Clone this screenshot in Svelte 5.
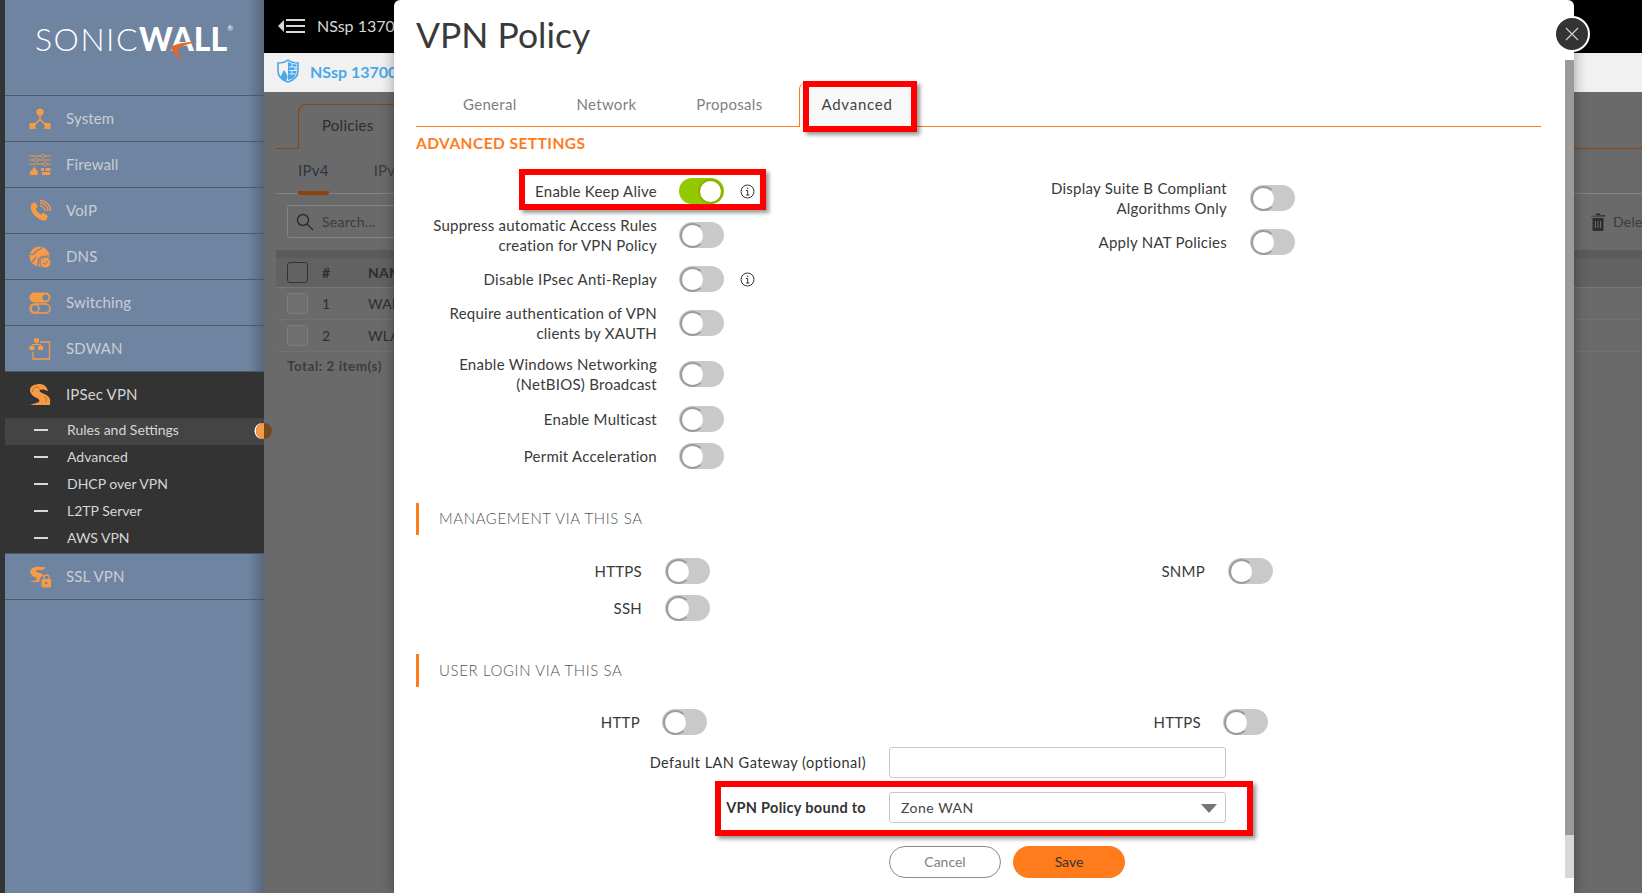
<script>
  const nav = [
    { name: 'System', icon: 'system' },
    { name: 'Firewall', icon: 'firewall' },
    { name: 'VoIP', icon: 'voip' },
    { name: 'DNS', icon: 'dns' },
    { name: 'Switching', icon: 'switching' },
    { name: 'SDWAN', icon: 'sdwan' }
  ];
  const subItems = ['Rules and Settings', 'Advanced', 'DHCP over VPN', 'L2TP Server', 'AWS VPN'];
  const leftRows = [
    { label: ['Enable Keep Alive'], on: true, info: true },
    { label: ['Suppress automatic Access Rules', 'creation for VPN Policy'] },
    { label: ['Disable IPsec Anti-Replay'], info: true },
    { label: ['Require authentication of VPN', 'clients by XAUTH'] },
    { label: ['Enable Windows Networking', '(NetBIOS) Broadcast'] },
    { label: ['Enable Multicast'] },
    { label: ['Permit Acceleration'] }
  ];
  const rightRows = [
    { label: ['Display Suite B Compliant', 'Algorithms Only'] },
    { label: ['Apply NAT Policies'] }
  ];
  const tabs = ['General', 'Network', 'Proposals'];
</script>

{#snippet navIcon(kind)}
  <svg class="nav-icon" width="22" height="22" viewBox="0 0 22 22" fill="#f79a45" stroke="none">
    {#if kind === 'system'}
      <circle cx="11" cy="4" r="3.6" />
      <path d="M11 7v5M11 11.5 5 17M11 11.5 17 17" stroke="#f79a45" stroke-width="1.5" fill="none" />
      <rect x="0.5" y="15" width="6" height="6" />
      <rect x="15.5" y="15" width="6" height="6" />
    {:else if kind === 'firewall'}
      <path d="M0.5 2h21M0.5 6h21M0.5 10h21" stroke="#f79a45" stroke-width="1" fill="none" />
      <rect x="12" y="0.5" width="4" height="3" rx="1.5" fill="#6f84a0" stroke="#f79a45" stroke-width=".8" />
      <rect x="5" y="4.5" width="4" height="3" rx="1.5" fill="#6f84a0" stroke="#f79a45" stroke-width=".8" />
      <rect x="14" y="8.5" width="4" height="3" rx="1.5" fill="#6f84a0" stroke="#f79a45" stroke-width=".8" />
      <path d="M1 21c-1-3 1-4 2.500-5.500.5-1 1-2 1.500-3 1 1.500 1.500 2 2.500 3.500 1 1 2 2.500 1 5z" />
      <path d="M12 14h3v3h-3zM16.500 14h5v3h-5zM13 18h8v3h-8z" />
    {:else if kind === 'voip'}
      <path d="M3 3.500 6 2l3 5-2.200 1.800c.8 2.400 2.800 4.600 5.400 5.800L14 12.500l5 3.500-1.500 3.500c-1 1.500-3 1.500-5 .5C7 18 3 13.500 1.800 8.500 1.300 6.500 1.800 4.500 3 3.500z" />
      <path d="M11 6a5 5 0 0 1 5 5M11 3a8 8 0 0 1 8 8M11 .5A10.500 10.500 0 0 1 21.500 11" stroke="#f79a45" stroke-width="1.300" fill="none" />
    {:else if kind === 'dns'}
      <circle cx="10.500" cy="10.500" r="10" />
      <path d="M1 8c3 1 5 0 6-3 2-1 5-1 6-4M9 20c0-4 0-7 3-9 2-1 4-1 8-1M3 16c2-2 3-3 4-5" stroke="#6f84a0" stroke-width="1.200" fill="none" />
      <circle cx="16.500" cy="16.500" r="5.500" stroke="#6f84a0" stroke-width="1" />
      <path d="M14 17l2 1.500 3-4" stroke="#6f84a0" stroke-width="1" fill="none" />
    {:else if kind === 'switching'}
      <rect x="0.500" y="0.500" width="21" height="10" rx="5" />
      <circle cx="16.500" cy="5.500" r="3" fill="#6f84a0" />
      <rect x="1" y="12" width="20" height="9" rx="4.500" fill="none" stroke="#f79a45" stroke-width="1.500" />
      <circle cx="6" cy="16.500" r="4" fill="none" stroke="#f79a45" stroke-width="1.500" />
    {:else if kind === 'sdwan'}
      <path d="M11 4h9.500v17H4v-7" fill="none" stroke="#f79a45" stroke-width="1.300" />
      <rect x="5" y="0.500" width="5" height="4" />
      <rect x="0.500" y="8" width="5" height="4" />
      <rect x="9" y="8" width="5" height="4" />
      <path d="M7.500 4.500v2M3 8V6.500h8.500V8" fill="none" stroke="#f79a45" stroke-width="1" />
    {:else if kind === 'ipsec'}
      <path d="M1 6C1 2 6 0 11 0c4 0 7 3 8 7-3-1-6-2-8-1-1 1 0 2 2 3 3 1 7 3 8 6 .3 2 0 4 0 6H1c3-1 6-2 9-3 1-1 0-3-2-4C5 13 1 10 1 6z" />
      <path d="M4 8c-1-3 1-5 3.500-5 2 0 3 1 3 2.500M15 12c2 1 3 3 2 6" stroke="#b5651d" stroke-width=".8" fill="none" />
    {:else if kind === 'ssl'}
      <path d="M1.500 4C3 1 7 .5 10 .7c2 .1 4 .7 6 0-.7 1.600-.8 3.100-2.500 3.300-2 .3-4-.5-6 .2-1.100.5-.5 1.500.8 2 2 .7 5 1 6 3 .4 1-2 1-3 2.500-.8 1.200-.5 3-1 4.300H.5c2-1.200 5.500-.8 7-2.300.8-1.100-.7-2-2.200-2.600C3 10 .5 7.200 1.500 4z" />
      <path d="M15 13v-1.500a2.500 2.500 0 0 1 5 0V13" fill="none" stroke="#f79a45" stroke-width="1.300" />
      <rect x="12.500" y="13" width="9.500" height="8.500" rx="1" />
      <circle cx="17.200" cy="17" r="1.300" fill="#6f84a0" />
    {/if}
  </svg>
{/snippet}

{#snippet toggle(on)}
  <span class="toggle" class:on><span class="thumb"></span></span>
{/snippet}

{#snippet info()}
  <svg class="info" width="15" height="15" viewBox="0 0 15 15" fill="none" stroke="#333">
    <circle cx="7.500" cy="7.500" r="6.500" />
    <path d="M6 6.500h1.700V11M6 11h3.300" />
    <circle cx="7.500" cy="4.200" r=".8" fill="#333" stroke="none" />
  </svg>
{/snippet}

{#snippet settingRow(row)}
  <div class="setting">
    <div class="setting-label">
      {#each row.label as line}<div>{line}</div>{/each}
    </div>
    {@render toggle(row.on)}
    {#if row.info}{@render info()}{/if}
  </div>
{/snippet}

<div class="page">
  <aside class="sidebar">
    <div class="logo">
      <span class="sonic">SONIC</span><span class="wall">WALL</span><span class="reg">®</span>
      <svg class="swoosh" width="32" height="22" viewBox="0 0 32 22">
        <path d="M30 .500C20 .800 8 1.500 1 6c-.5 3 4 8 13 15-4-5-7-9-6.500-12C11 4.500 20 2 30 .500z" fill="#e5662a" />
      </svg>
    </div>
    {#each nav as item}
      <div class="nav-row">
        {@render navIcon(item.icon)}
        <span>{item.name}</span>
      </div>
    {/each}
    <div class="group">
      <div class="nav-row open">
        {@render navIcon('ipsec')}
        <span>IPSec VPN</span>
      </div>
      {#each subItems as sub, i}
        <div class="sub-row" class:selected={i === 0}>
          <span class="dash"></span>
          <span>{sub}</span>
          {#if i === 0}<span class="marker"></span>{/if}
        </div>
      {/each}
    </div>
    <div class="nav-row">
      {@render navIcon('ssl')}
      <span>SSL VPN</span>
    </div>
  </aside>

  <main class="main">
    <header class="topbar">
      <svg width="28" height="18" viewBox="0 0 28 18" fill="#d8d8d8">
        <path d="M6 3v12L0 9z" />
        <rect x="8" y="2" width="19" height="2" />
        <rect x="8" y="8" width="19" height="2" />
        <rect x="8" y="14" width="19" height="2" />
      </svg>
      <span>NSsp 13700</span>
    </header>
    <div class="crumb">
      <svg width="22" height="24" viewBox="0 0 22 24">
        <path d="M11 1c2.500 2 6 3 10 3v8c0 5-4 9-10 11C5 21 1 17 1 12V4c4 0 7.500-1 10-3z" fill="none" stroke="#4aa8e8" stroke-width="1.600" />
        <path d="M11 3c2.500 1.500 5 2.500 8.500 2.500V12c0 3-1.500 6-4 7.500L11 21z" fill="#4aa8e8" />
        <path d="M12 8h8M12 11.500h8M12 15h7M15 5v3M18 8v3.500M15 11.500V15" stroke="#fff" stroke-width=".8" />
        <path d="M7 11c2 3 3.500 5 3.500 7a3 3 0 0 1-6.500 0c0-2 1.500-4 3-7z" fill="#4aa8e8" />
      </svg>
      <span>NSsp 13700</span>
    </div>
    <section class="content">
      <div class="tabbar"><div class="tab-active">Policies</div></div>
      <div class="subtabs">
        <span class="subtab current">IPv4</span>
        <span class="subtab">IPv6</span>
      </div>
      <div class="toolbar">
        <div class="search">
          <svg width="18" height="18" viewBox="0 0 18 18" fill="none" stroke="#2e2e2e" stroke-width="1.500">
            <circle cx="7" cy="7" r="5.500" />
            <path d="M11 11l6 6" />
          </svg>
          <span>Search...</span>
        </div>
        <div class="delete">
          <svg width="16" height="18" viewBox="0 0 16 18" fill="#2e2e2e">
            <path d="M1 3l14-1v1.500H1zM5.500 2l.5-1.500h4L10.500 2z" />
            <path d="M2.500 5h11v12a1 1 0 0 1-1 1h-9a1 1 0 0 1-1-1zM5 8v7h1V8zM7.500 8v7h1V8zM10 8v7h1V8z" fill-rule="evenodd" />
          </svg>
          <span>Delete</span>
        </div>
      </div>
      <div class="table">
        <div class="strip"></div>
        <div class="tr head">
          <span class="check strong"></span><span class="num">#</span><span>NAME</span>
        </div>
        <div class="tr"><span class="check"></span><span class="num">1</span><span>WAN</span></div>
        <div class="tr"><span class="check"></span><span class="num">2</span><span>WLAN</span></div>
        <div class="total">Total: 2 item(s)</div>
      </div>
    </section>
  </main>

  <div class="modal">
    <h1>VPN Policy</h1>
    <nav class="tabs">
      {#each tabs as t}<span class="tab">{t}</span>{/each}
      <span class="tab current">Advanced</span>
    </nav>
    <h2>ADVANCED SETTINGS</h2>

    <div class="columns">
      <div class="col-left">
        {#each leftRows as row}{@render settingRow(row)}{/each}
      </div>
      <div class="col-right">
        {#each rightRows as row}{@render settingRow(row)}{/each}
      </div>
    </div>

    <h3 class="section mgmt">MANAGEMENT VIA THIS SA</h3>
    <div class="pairs mgmt-grid">
      <span>HTTPS</span>{@render toggle(false)}<span>SNMP</span>{@render toggle(false)}
      <span>SSH</span>{@render toggle(false)}
    </div>

    <h3 class="section login">USER LOGIN VIA THIS SA</h3>
    <div class="pairs login-grid">
      <span>HTTP</span>{@render toggle(false)}<span>HTTPS</span>{@render toggle(false)}
    </div>

    <div class="form">
      <label for="gw">Default LAN Gateway (optional)</label>
      <input id="gw" type="text" />
      <span class="strong">VPN Policy bound to</span>
      <div class="select">
        <span>Zone WAN</span>
        <span class="caret"></span>
      </div>
    </div>
    <div class="actions">
      <button class="cancel">Cancel</button>
      <button class="save">Save</button>
    </div>

    <div class="scroll"></div>
    <div class="mark mark-tab"></div>
    <div class="mark mark-keep"></div>
    <div class="mark mark-bound"></div>
  </div>

  <button class="close" aria-label="Close">
    <svg width="14" height="14" viewBox="0 0 14 14" stroke="#d0d0d0" stroke-width="1.200"><path d="M1 1l12 12M13 1 1 13" /></svg>
  </button>
</div>

<style>
  :global(body) {
    margin: 0;
    overflow: hidden;
    font-family: Lato, "Open Sans", sans-serif;
  }

  .page {
    position: relative;
    display: flex;
    width: 1642px;
    height: 893px;
    overflow: hidden;
    background: #333;
    color: #333;
    font-size: 15px;
  }

  /* sidebar */
  .sidebar {
    position: relative;
    flex: none;
    width: 259px;
    margin-left: 5px;
    background: linear-gradient(90deg, #6f84a0 94%, #58687e);
    color: #c9ced4;
  }

  .logo {
    position: relative;
    display: flex;
    align-items: flex-start;
    height: 96px;
    padding: 19px 0 0 30px;
    box-sizing: border-box;
    border-bottom: 1px solid #4e5967;
    color: #fff;
    font-size: 32px;
    line-height: 40px;
  }

  .sonic {
    font-weight: 300;
    letter-spacing: 1.500px;
  }

  .wall {
    font-weight: 900;
    letter-spacing: 0;
  }

  .reg {
    font-size: 7px;
    line-height: 18px;
  }

  .swoosh {
    position: absolute;
    left: 165px;
    top: 41px;
  }

  .nav-row {
    display: flex;
    align-items: center;
    height: 46px;
    box-sizing: border-box;
    padding-left: 24px;
    gap: 15px;
    border-bottom: 1px solid #4e5967;
    font-size: 15px;
    letter-spacing: .15px;
  }

  .nav-row span {
    margin-top: -2px;
  }

  .nav-row.open {
    border-bottom: none;
    color: #d4d4d4;
  }

  .group {
    background: #333;
    border-bottom: 1px solid #4e5967;
  }

  .sub-row {
    position: relative;
    display: flex;
    align-items: center;
    height: 27px;
    box-sizing: border-box;
    padding: 0 0 4px 28px;
    gap: 20px;
    color: #d6d6d6;
    font-size: 14px;
  }

  .sub-row.selected {
    background: #444;
  }

  .dash {
    width: 14px;
    height: 2px;
    margin-left: 1px;
    margin-right: -1px;
    background: #d8d8d8;
  }

  .marker {
    position: absolute;
    right: -8px;
    top: 5px;
    width: 16px;
    height: 16px;
    border-radius: 50%;
    background: linear-gradient(90deg, #f79a45 50%, #704a22 50%);
    box-shadow: -1.500px 0 0 #fff;
    z-index: 2;
  }

  /* page behind the dialog */
  .main {
    flex: 1;
    display: flex;
    flex-direction: column;
    min-width: 0;
    background: #6a6a6a;
  }

  .topbar {
    display: flex;
    align-items: center;
    height: 51px;
    padding: 0 0 2px 14px;
    gap: 11px;
    background: #000;
    color: #d8d8d8;
    font-size: 16px;
  }

  .crumb {
    display: flex;
    align-items: center;
    height: 36px;
    padding: 0 0 3px 13px;
    gap: 11px;
    background: #f1f1f1;
    color: #4aa8e8;
    font-size: 16px;
    font-weight: 700;
  }

  .content {
    padding-left: 12px;
    color: #2e2e2e;
    letter-spacing: .25px;
  }

  .tabbar {
    display: flex;
    height: 44px;
    margin-top: 12px;
    padding-left: 22px;
    border-bottom: 1px solid #8a4311;
  }

  .tab-active {
    width: 300px;
    padding: 11px 0 0 23px;
    background: #6a6a6a;
    border: 1px solid #8a4311;
    border-bottom: none;
    border-right: none;
    border-top-left-radius: 8px;
    margin-bottom: -1px;
    font-size: 15px;
  }

  .subtabs {
    display: flex;
    height: 44px;
    padding-left: 22px;
    gap: 45px;
    border-bottom: 1px solid #828282;
    font-size: 15px;
  }

  .subtab {
    padding-top: 12px;
    color: #3c3c3c;
  }

  .subtab.current {
    color: #2c3644;
    border-bottom: 4px solid #8a4311;
    margin-bottom: -2px;
    border-radius: 2px;
  }

  .toolbar {
    display: flex;
    justify-content: space-between;
    margin-top: 11px;
    padding-left: 11px;
  }

  .search {
    display: flex;
    align-items: center;
    width: 300px;
    height: 33px;
    box-sizing: border-box;
    padding-left: 8px;
    gap: 8px;
    border: 1px solid #848484;
    border-radius: 3px;
    font-size: 14px;
    color: #3c3c3c;
  }

  .delete {
    flex: none;
    display: flex;
    align-items: center;
    width: 52px;
    gap: 7px;
    overflow: hidden;
    white-space: nowrap;
    font-size: 14px;
    color: #3c3c3c;
  }

  .delete svg {
    flex: none;
  }

  .table {
    margin-top: 12px;
    font-size: 14px;
  }

  .strip {
    height: 8px;
    background: #5b5b5b;
  }

  .tr {
    display: flex;
    align-items: center;
    height: 32px;
    padding-left: 11px;
    border-bottom: 1px solid #717171;
    box-sizing: border-box;
  }

  .tr.head {
    height: 30px;
    background: #626262;
    border-bottom-color: #777;
    font-weight: 700;
  }

  .check {
    width: 19px;
    height: 19px;
    border: 1px solid #7d7d7d;
    border-radius: 3px;
    background: #6f6f6f;
  }

  .check.strong {
    border-color: #333;
    background: none;
  }

  .num {
    width: 46px;
    margin-left: 14px;
  }

  .total {
    padding: 6px 0 0 11px;
    color: #3c3c3c;
    font-weight: 700;
    font-size: 13.500px;
    letter-spacing: .5px;
  }

  /* dialog */
  .modal {
    position: absolute;
    left: 394px;
    top: 0;
    width: 1180px;
    height: 893px;
    padding-left: 22px;
    box-sizing: border-box;
    background: #fff;
    border-radius: 6px 6px 0 0;
    box-shadow: 0 0 14px rgba(0, 0, 0, .35);
    letter-spacing: .25px;
  }

  h1 {
    margin: 0;
    height: 83px;
    font-size: 35.500px;
    font-weight: 400;
    line-height: 69px;
    letter-spacing: 0;
    color: #3a3a3a;
  }

  .tabs {
    display: flex;
    width: 1125px;
    height: 44px;
    box-sizing: border-box;
    border-bottom: 1px solid #ff7b1c;
    padding-left: 17px;
    font-size: 15px;
    line-height: 43px;
    letter-spacing: .3px;
    color: #808080;
  }

  .tab {
    padding: 0 30px;
  }

  .tab.current {
    margin-left: 7px;
    padding: 0 21px;
    width: 117px;
    height: 44px;
    box-sizing: border-box;
    letter-spacing: .75px;
    color: #444;
    background: #f8f8f8;
    border-left: 1px solid #ff7b1c;
    border-top-left-radius: 6px;
  }

  h2 {
    margin: 0;
    height: 33px;
    font-size: 15.500px;
    font-weight: 700;
    line-height: 33px;
    letter-spacing: .45px;
    color: #ff7b1c;
  }

  .columns {
    display: flex;
    margin-top: 18px;
  }

  .col-left {
    display: flex;
    flex-direction: column;
    gap: 11px;
    width: 560px;
  }

  .col-left .setting:nth-child(6) {
    margin-top: 1px;
  }

  .col-right {
    display: flex;
    flex-direction: column;
    gap: 11px;
    width: 400px;
  }

  .col-left .setting-label {
    width: 241px;
  }

  .col-right .setting-label {
    width: 251px;
    margin-right: 1px;
  }

  .setting {
    display: flex;
    align-items: center;
    gap: 22px;
    min-height: 26px;
  }

  .setting-label {
    text-align: right;
    line-height: 20px;
    color: #3a3a3a;
  }

  .toggle {
    flex: none;
    position: relative;
    display: block;
    width: 45px;
    height: 26px;
    border-radius: 13px;
    background: #c9c9c9;
    align-self: center;
  }

  .toggle.on {
    background: #94c800;
  }

  .thumb {
    position: absolute;
    left: 1px;
    top: 1px;
    width: 21px;
    height: 21px;
    border: 2px solid #9c9c9c;
    border-right-color: #c9c9c9;
    border-radius: 50%;
    background: #fff;
  }

  .on .thumb {
    left: auto;
    right: 1px;
    border-color: #85b400;
  }

  .info {
    flex: none;
    margin-left: -6px;
  }

  .section {
    margin: 34px 0 0;
    height: 32px;
    padding-left: 20px;
    border-left: 3px solid #ff7b1c;
    font-size: 15px;
    font-weight: 300;
    line-height: 31px;
    letter-spacing: .62px;
    color: #555;
  }

  .section.login {
    margin-top: 33px;
    height: 33px;
    line-height: 32px;
  }

  .pairs {
    display: grid;
    align-items: center;
    row-gap: 11px;
    margin-top: 23px;
    color: #3a3a3a;
  }

  .pairs span:not(.toggle, .thumb) {
    text-align: right;
  }

  .mgmt-grid {
    grid-template-columns: 226px 45px 472px 45px;
    column-gap: 23px;
  }

  .login-grid {
    grid-template-columns: 224px 45px 472px 45px;
    column-gap: 22px;
    margin-top: 22px;
  }

  .form {
    display: grid;
    grid-template-columns: 450px 337px;
    column-gap: 23px;
    row-gap: 14px;
    align-items: center;
    margin-top: 12px;
  }

  .form label,
  .form .strong {
    text-align: right;
    color: #333;
    font-size: 14.500px;
    letter-spacing: .48px;
  }

  .form .strong {
    font-weight: 700;
    letter-spacing: .3px;
  }

  input,
  .select {
    height: 31px;
    box-sizing: border-box;
    border: 1px solid #c8c8c8;
    border-radius: 3px;
    background: #fff;
  }

  .select {
    display: flex;
    align-items: center;
    justify-content: space-between;
    padding: 0 8px 1px 11px;
    color: #444;
    font-size: 14px;
    letter-spacing: .5px;
  }

  .caret {
    margin-top: 3px;
    border-left: 8px solid transparent;
    border-right: 8px solid transparent;
    border-top: 9px solid #757575;
  }

  .actions {
    display: flex;
    gap: 12px;
    margin: 23px 0 0 473px;
  }

  .actions button {
    width: 112px;
    height: 32px;
    padding-bottom: 2px;
    border-radius: 16px;
    font: inherit;
    font-size: 14px;
  }

  .cancel {
    border: 1px solid #8a8a8a;
    background: #fff;
    color: #808080;
  }

  .save {
    border: none;
    background: #ff7b1c;
    color: #333;
  }

  .scroll {
    position: absolute;
    right: 0;
    top: 60px;
    bottom: 15px;
    width: 9px;
    background: linear-gradient(#9b9b9b 775px, #d8d8d8 775px);
  }

  .mark {
    position: absolute;
    box-sizing: border-box;
    border: 6px solid #f00;
    box-shadow: 3px 3px 4px rgba(0, 0, 0, .4);
  }

  .mark-tab {
    left: 409px;
    top: 81px;
    width: 114px;
    height: 51px;
  }

  .mark-keep {
    left: 125px;
    top: 169px;
    width: 247px;
    height: 41px;
  }

  .mark-bound {
    left: 321px;
    top: 781px;
    width: 538px;
    height: 55px;
  }

  .close {
    position: absolute;
    left: 1554px;
    top: 16px;
    display: flex;
    align-items: center;
    justify-content: center;
    width: 32px;
    height: 32px;
    padding: 0;
    box-sizing: content-box;
    border: 2.500px solid #fff;
    border-radius: 50%;
    background: #333;
  }
</style>
